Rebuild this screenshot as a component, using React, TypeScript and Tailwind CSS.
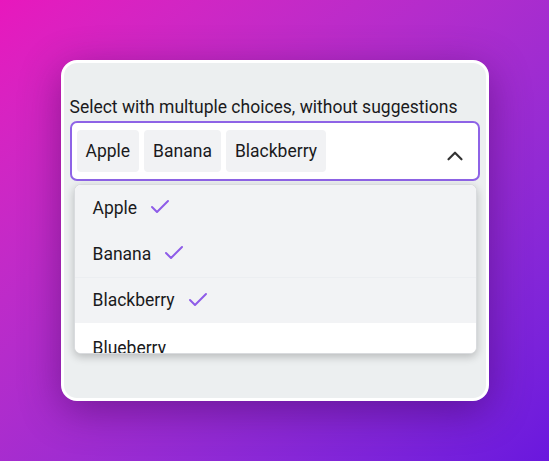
import { Check, ChevronUp } from "lucide-react";

const selected = ["Apple", "Banana", "Blackberry"];
const options = [
  { label: "Apple", checked: true },
  { label: "Banana", checked: true },
  { label: "Blackberry", checked: true },
  { label: "Blueberry", checked: false },
];

export default function App() {
  return (
    <div
      className="w-[549px] h-[461px] flex items-center justify-center bg-gradient-to-br from-[#e817bd] to-[#6a17de]"
      style={{ fontFamily: "Roboto, 'Liberation Sans', sans-serif" }}
    >
      <div className="w-[428px] h-[341px] rounded-[16px] border-[3px] border-white bg-[#eceff0] shadow-[0_10px_40px_rgba(60,0,80,0.45)] pl-[6px] pr-[6px] pt-[32px]">
        <label className="block text-[17.5px] leading-[24px] text-[#1a1a1c] mb-[2px] whitespace-nowrap">
          Select with multuple choices, without suggestions
        </label>

        <div className="h-[60px] rounded-[7px] border-2 border-[#8e63e6] bg-white flex items-center pl-[5px] pr-[10px]">
          <div className="flex gap-[5px] flex-1">
            {selected.map((s) => (
              <span
                key={s}
                className="h-[42px] px-[9px] rounded-[4px] bg-[#f1f2f4] flex items-center text-[17.5px] text-[#1a1a1c]"
              >
                {s}
              </span>
            ))}
          </div>
          <ChevronUp className="mt-[10px] text-[#333]" size={26} strokeWidth={2} />
        </div>

        <div className="mt-[3px] ml-[4px] mr-[3px] h-[170px] rounded-[7px] border border-[#d9dbde] bg-white overflow-hidden shadow-[0_3px_8px_rgba(0,0,0,0.22)]">
          {options.map((o, i) => (
            <div
              key={o.label}
              className={
                "h-[46px] flex items-center pl-[18px] gap-[11px] text-[17.5px] text-[#1a1a1c] " +
                (o.checked ? "bg-[#f2f3f5] " : "bg-white ") +
                (i === 2 ? "border-t border-[#eceef1]" : "")
              }
            >
              <span className={i === 3 ? "mt-[4px]" : ""}>{o.label}</span>
              {o.checked && <Check className="text-[#8e5ce8] -mt-[2px]" size={24} strokeWidth={2} />}
            </div>
          ))}
        </div>
      </div>
    </div>
  );
}
